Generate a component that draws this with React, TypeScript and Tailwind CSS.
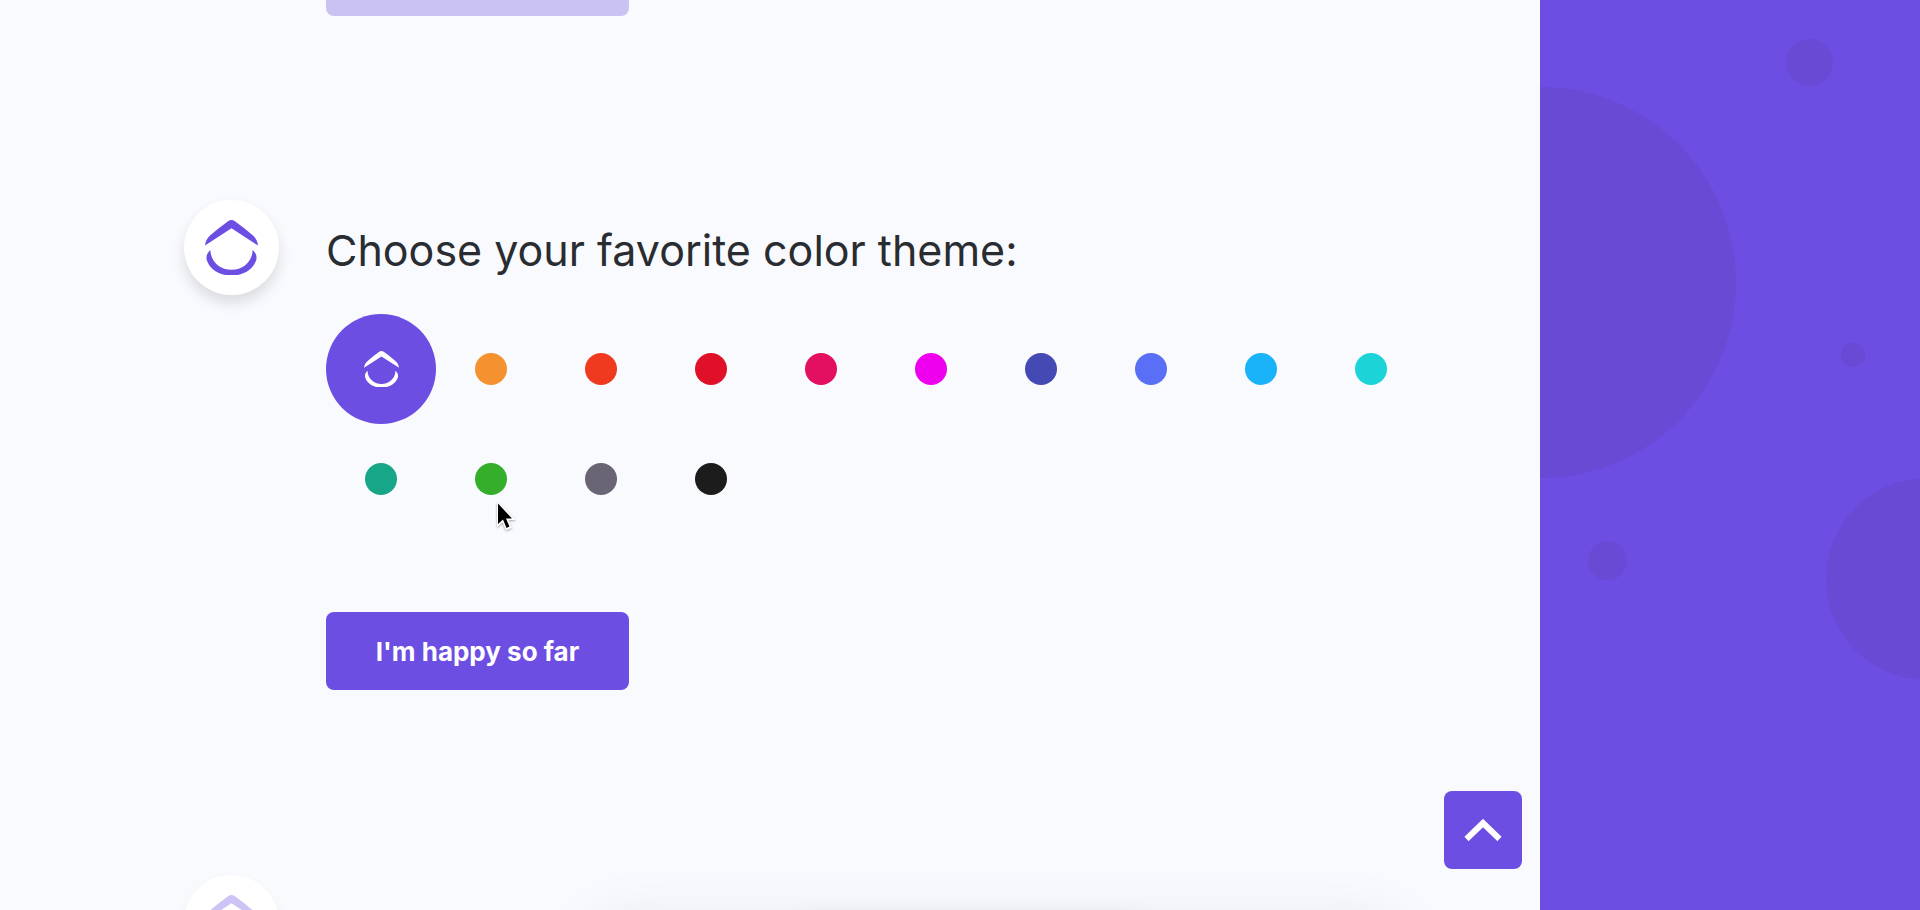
import { useState } from 'react';

const THEMES = [
    { name: 'Purple', color: 'bg-[#6c4ee3]' },
    { name: 'Orange', color: 'bg-[#f3922e]' },
    { name: 'Vermilion', color: 'bg-[#f03a20]' },
    { name: 'Red', color: 'bg-[#e01028]' },
    { name: 'Crimson', color: 'bg-[#e30f61]' },
    { name: 'Magenta', color: 'bg-[#ee00ee]' },
    { name: 'Indigo', color: 'bg-[#4549b3]' },
    { name: 'Blue', color: 'bg-[#596ff5]' },
    { name: 'Sky', color: 'bg-[#1ab3fa]' },
    { name: 'Turquoise', color: 'bg-[#1cd4d8]' },
    { name: 'Teal', color: 'bg-[#18a689]' },
    { name: 'Green', color: 'bg-[#34ae2b]' },
    { name: 'Gray', color: 'bg-[#6a6575]' },
    { name: 'Black', color: 'bg-[#1c1c1c]' },
];

function Logo({ className }: { className: string }) {
    return (
        <svg viewBox="0 0 54 57" fill="currentColor" className={className} aria-hidden="true">
            <path d="M0 26C0.500 21 2.500 18 6 15Q14 8 23.500 1.200Q27 -1 30.500 1.200Q40 8 48 15C51.500 18 53.500 21 54 26L27 8.500Z" />
            <path d="M5.500 30.500C5.500 42 15 50.800 27 50.800S48.500 42 48.500 30.500C52 33.500 53 37 52.300 40.500C49.500 50 39.500 56.600 27 56.600S4.500 50 1.700 40.500C1 37 2 33.500 5.500 30.500Z" />
        </svg>
    );
}

function Avatar({ faded = false }: { faded?: boolean }) {
    return (
        <div
            className={
                faded
                    ? 'flex size-[95px] shrink-0 items-center justify-center rounded-full bg-white shadow-[0_8px_14px_rgba(0,0,0,0.06)]'
                    : 'flex size-[95px] shrink-0 items-center justify-center rounded-full bg-white shadow-[0_8px_14px_rgba(0,0,0,0.12)]'
            }
        >
            <Logo className={faded ? 'w-[53px] text-[#cdc4f5]' : 'w-[53px] text-[#6c4ee3]'} />
        </div>
    );
}

function Bubbles() {
    return (
        <aside className="relative w-[380px] shrink-0 overflow-hidden bg-[#6c4ee3]">
            <span className="absolute top-[87px] -left-[195px] size-[391px] rounded-full bg-[#694ad4]" />
            <span className="absolute top-[39px] left-[246px] size-[47px] rounded-full bg-[#694ad4]" />
            <span className="absolute top-[343px] left-[301px] size-6 rounded-full bg-[#694ad4]" />
            <span className="absolute top-[541px] left-12 size-[39px] rounded-full bg-[#694ad4]" />
            <span className="absolute top-[478px] left-[286px] size-[202px] rounded-full bg-[#694ad4]" />
        </aside>
    );
}

export default function App() {
    const [theme, setTheme] = useState('Purple');

    return (
        <div className="flex h-screen overflow-hidden bg-[#f9fafe] font-['Inter',sans-serif]">
            <main className="relative flex-1 overflow-hidden pl-[184px]">
                {/* end of the previous step */}
                <div className="ml-[142px] flex h-4 items-end overflow-hidden">
                    <button disabled aria-label="Previous step done" className="h-[78px] w-[303px] shrink-0 rounded-lg bg-[#cbc2f4]" />
                </div>

                <section className="mt-[184px] flex gap-[47px]">
                    <Avatar />
                    <div className="flex-1 pt-6">
                        <h1 className="text-[43px] leading-[52px] text-[#292c31]">Choose your favorite color theme:</h1>
                        <div className="mt-[38px] flex max-w-[1100px] flex-wrap">
                            {THEMES.map(({ name, color }) => (
                                <button
                                    key={name}
                                    aria-label={name}
                                    aria-pressed={theme === name}
                                    onClick={() => setTheme(name)}
                                    className="flex size-[110px] items-center justify-center"
                                >
                                    {theme === name ? (
                                        <span className={`flex size-[110px] items-center justify-center rounded-full ${color}`}>
                                            <Logo className="w-[35px] text-white" />
                                        </span>
                                    ) : (
                                        <span className={`size-8 rounded-full ${color}`} />
                                    )}
                                </button>
                            ))}
                        </div>
                        <button className="mt-[78px] h-[78px] w-[303px] rounded-lg bg-[#6c4ee3] text-[26px] font-bold text-white">
                            I'm happy so far
                        </button>
                    </div>
                </section>

                {/* next step, still inactive */}
                <section className="mt-[185px] flex gap-[47px]">
                    <Avatar faded />
                    <div className="mt-[46px] ml-[270px] h-[300px] w-[800px] rounded-lg shadow-[0_0_60px_rgba(0,0,0,0.08)]">
                        <div className="ml-[205px] h-[300px] w-[340px] rounded-lg shadow-[0_0_24px_rgba(0,0,0,0.1)]" />
                    </div>
                </section>

                <button
                    aria-label="Back to top"
                    className="absolute right-[18px] bottom-[41px] flex size-[78px] items-center justify-center rounded-lg bg-[#6c4ee3] text-white"
                >
                    <svg viewBox="0 0 38 22" fill="none" stroke="currentColor" strokeWidth="6" className="w-[38px]" aria-hidden="true">
                        <path d="M2.500 20L19 4L35.500 20" />
                    </svg>
                </button>

                <svg viewBox="0 0 20 30" className="absolute top-[502px] left-[496px] w-5 drop-shadow-[0_1px_1px_rgba(0,0,0,0.35)]" aria-hidden="true">
                    <path d="M2 1V23L7 18.500L10.500 27L14.500 25.200L11 17H17.500Z" fill="#fff" stroke="#fff" strokeWidth="2" />
                    <path d="M2 1.500V22L7 17.500L10.500 26L13.500 24.500L10 16.500H16Z" fill="#000" />
                </svg>
            </main>
            <Bubbles />
        </div>
    );
}
